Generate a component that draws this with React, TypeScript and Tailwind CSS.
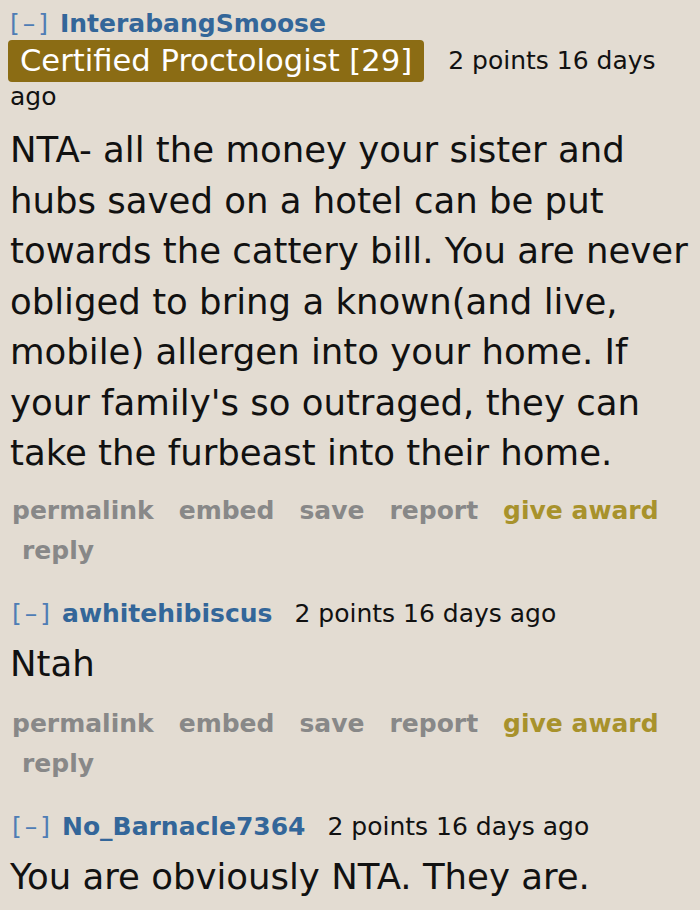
import React from 'react';

const FONT = { fontFamily: '"DejaVu Sans", Verdana, sans-serif' };

function Buttons() {
  return (
    <div className="font-bold text-[25px] leading-[40px] text-[#888888] whitespace-nowrap">
      <div className="flex gap-[25px]">
        <span>permalink</span>
        <span>embed</span>
        <span>save</span>
        <span>report</span>
        <span className="text-[#a8922c]">give award</span>
      </div>
      <div className="pl-[10px]">reply</div>
    </div>
  );
}

function Tagline({ author }: { author: string }) {
  return (
    <span className="inline-flex items-baseline gap-[9px]">
      <span className="text-[#4f7db5] font-normal tracking-[3px]">[–]</span>
      <span className="text-[#336699] font-bold">{author}</span>
    </span>
  );
}

const body = [
  'NTA- all the money your sister and',
  'hubs saved on a hotel can be put',
  'towards the cattery bill. You are never',
  'obliged to bring a known(and live,',
  'mobile) allergen into your home. If',
  "your family's so outraged, they can",
  'take the furbeast into their home.',
];

export default function App() {
  return (
    <div className="w-[700px] h-[910px] overflow-hidden bg-[#e3dcd2] text-[#111111]" style={FONT}>
      {/* first comment */}
      <div className="pt-[9px] pl-[10px]">
        <div className="text-[25px] leading-[30px]">
          <Tagline author="InterabangSmoose" />
        </div>
        <div className="flex items-center gap-[24px] mt-[1px] -ml-[2px] whitespace-nowrap">
          <span className="bg-[#8b6c14] text-white text-[30.6px] leading-[42px] px-[12px] rounded-[4px]">
            Certified Proctologist [29]
          </span>
          <span className="text-[25px]">2 points 16 days</span>
        </div>
        <div className="text-[25px] leading-[30px]">ago</div>
        <p className="text-[35.5px] leading-[50.5px] mt-[13px] whitespace-nowrap">
          {body.map((line) => (
            <span key={line} className="block">{line}</span>
          ))}
        </p>
        <div className="mt-[12px] pl-[2px]">
          <Buttons />
        </div>
      </div>

      {/* second comment */}
      <div className="pt-[28px] pl-[12px]">
        <div className="text-[25px] leading-[30px] flex items-baseline gap-[22px] whitespace-nowrap">
          <Tagline author="awhitehibiscus" />
          <span>2 points 16 days ago</span>
        </div>
        <p className="text-[35.5px] leading-[50.5px] mt-[10px] -ml-[2px]">Ntah</p>
        <div className="mt-[15px]">
          <Buttons />
        </div>
      </div>

      {/* third comment */}
      <div className="pt-[28px] pl-[12px]">
        <div className="text-[25px] leading-[30px] flex items-baseline gap-[22px] whitespace-nowrap">
          <Tagline author="No_Barnacle7364" />
          <span>2 points 16 days ago</span>
        </div>
        <p className="text-[35.5px] leading-[50.5px] mt-[10px] -ml-[2px] whitespace-nowrap">
          You are obviously NTA. They are.
        </p>
      </div>
    </div>
  );
}
